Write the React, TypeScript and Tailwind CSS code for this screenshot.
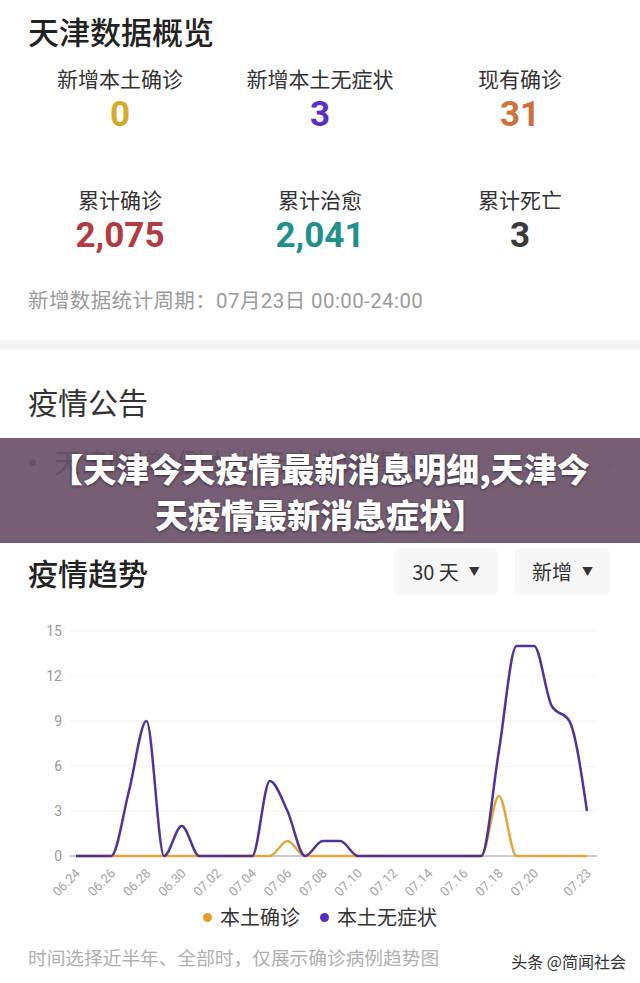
import React from "react";

const stats = [
  { label: "新增本土确诊", value: "0", color: "text-[#d6ab2c]" },
  { label: "新增本土无症状", value: "3", color: "text-[#5b2fbf]" },
  { label: "现有确诊", value: "31", color: "text-[#d0703a]" },
  { label: "累计确诊", value: "2,075", color: "text-[#b33a40]" },
  { label: "累计治愈", value: "2,041", color: "text-[#21908d]" },
  { label: "累计死亡", value: "3", color: "text-[#3a3a3a]" },
];

// 06.24 -> 07.23, one value per day
const asymptomatic = [0, 0, 0, 4.3, 9, 0, 2, 0, 0, 0, 0, 5, 3, 0, 1, 1, 0, 0, 0, 0, 0, 0, 0, 0, 7, 14, 14, 10, 9, 3];
const confirmed = [0, 0, 0, 0, 0, 0, 0, 0, 0, 0, 0, 0, 1, 0, 0, 0, 0, 0, 0, 0, 0, 0, 0, 0, 4, 0, 0, 0, 0, 0];

const xLabels: [number, string][] = [
  [0, "06.24"], [2, "06.26"], [4, "06.28"], [6, "06.30"], [8, "07.02"], [10, "07.04"], [12, "07.06"],
  [14, "07.08"], [16, "07.10"], [18, "07.12"], [20, "07.14"], [22, "07.16"], [24, "07.18"], [26, "07.20"], [29, "07.23"],
];

const STEP = 17.62;
const xOf = (i: number) => 76 + i * STEP;
const yOf = (v: number) => 256 - v * 15;

// monotone cubic, same idea as d3 curveMonotoneX
function monotonePath(vals: number[]) {
  const n = vals.length;
  const ys = vals.map(yOf);
  const h = STEP;
  const m: number[] = new Array(n).fill(0);
  for (let i = 1; i < n - 1; i++) {
    const s0 = (ys[i] - ys[i - 1]) / h;
    const s1 = (ys[i + 1] - ys[i]) / h;
    const p = (s0 + s1) / 2;
    m[i] = (Math.sign(s0) + Math.sign(s1)) * Math.min(Math.abs(s0), Math.abs(s1), 0.5 * Math.abs(p)) || 0;
  }
  m[0] = (3 * (ys[1] - ys[0]) / h - m[1]) / 2;
  m[n - 1] = (3 * (ys[n - 1] - ys[n - 2]) / h - m[n - 2]) / 2;
  let d = `M${xOf(0)},${ys[0]}`;
  for (let i = 0; i < n - 1; i++) {
    const x0 = xOf(i);
    const x1 = xOf(i + 1);
    d += ` C${x0 + h / 3},${ys[i] + (m[i] * h) / 3} ${x1 - h / 3},${ys[i + 1] - (m[i + 1] * h) / 3} ${x1},${ys[i + 1]}`;
  }
  return d;
}

const TrendChart = () => (
  <svg width="640" height="300" viewBox="0 0 640 300" className="block">
    {[15, 12, 9, 6, 3].map((v) => (
      <line key={v} x1="70" x2="597" y1={yOf(v)} y2={yOf(v)} stroke="#efefef" strokeWidth="1" />
    ))}
    <line x1="70" x2="597" y1={yOf(0)} y2={yOf(0)} stroke="#9a9a9a" strokeWidth="1" />
    {[15, 12, 9, 6, 3, 0].map((v) => (
      <text key={v} x="62" y={yOf(v) + 5} textAnchor="end" fontSize="14" fill="#9a9a9a" fontFamily="Roboto, sans-serif">
        {v}
      </text>
    ))}
    {xLabels.map(([i, t]) => (
      <text
        key={t}
        x={xOf(i) + 5}
        y={274}
        textAnchor="end"
        fontSize="13"
        fill="#a5a5a5"
        fontFamily="Roboto, sans-serif"
        transform={`rotate(-45 ${xOf(i) + 5} 274)`}
      >
        {t}
      </text>
    ))}
    <path d={monotonePath(confirmed)} fill="none" stroke="#e2a83c" strokeWidth="2.5" strokeLinejoin="round" />
    <path d={monotonePath(asymptomatic)} fill="none" stroke="#533399" strokeWidth="2.5" strokeLinejoin="round" />
  </svg>
);

const Dropdown = ({ text, w }: { text: string; w: string }) => (
  <div className={`flex h-[47px] ${w} items-center justify-center gap-[10px] rounded-md bg-[#f7f7f7] text-[20px] text-[#333]`}>
    <span>{text}</span>
    <span className="text-[11px] text-[#333]">▼</span>
  </div>
);

export default function App() {
  return (
    <div className="relative w-[640px] overflow-hidden bg-white font-['Noto_Sans_CJK_SC',sans-serif]">
      {/* overview */}
      <div className="px-7 pt-[11px]">
        <h1 className="text-[31px] leading-[40px] font-medium text-[#222]">天津数据概览</h1>
        <div className="mx-[-8px] mt-[13px] grid grid-cols-3 gap-y-[50px]">
          {stats.map((s) => (
            <div key={s.label} className="flex flex-col items-center">
              <div className="text-[21px] leading-[28px] text-[#333]">{s.label}</div>
              <div className={`mt-[3px] font-['Roboto',sans-serif] text-[35px] leading-[40px] font-bold ${s.color}`}>
                {s.value}
              </div>
            </div>
          ))}
        </div>
        <p className="mt-[31px] font-['Roboto','Noto_Sans_CJK_SC',sans-serif] text-[20.5px] leading-[28px] tracking-[0.4px] text-[#9b9b9b]">
          新增数据统计周期：07月23日 00:00-24:00
        </p>
      </div>
      <div className="mt-[25px] h-[10px] bg-[#f4f4f4]" />

      {/* notices */}
      <div className="px-7 pt-[31px]">
        <h2 className="text-[30px] leading-[40px] text-[#333]">疫情公告</h2>
        <div className="mt-[26px] flex h-[30px] items-center">
          <span className="ml-[1px] h-[7px] w-[7px] rounded-full bg-[#a03040]" />
          <span className="ml-[18px] flex-1 text-[27px] leading-[30px] text-[#333]">天津昨增8例本土无症状详情公布</span>
          <span className="text-[24px] text-[#bbb]">›</span>
        </div>
      </div>

      {/* trend */}
      <div className="mt-[71px] flex items-center justify-between pl-7 pr-[30px]">
        <h2 className="text-[30px] leading-[40px] font-medium text-[#222]">疫情趋势</h2>
        <div className="flex gap-[17px]">
          <Dropdown text="30 天" w="w-[104px]" />
          <Dropdown text="新增" w="w-[95px]" />
        </div>
      </div>
      <div className="mt-[5px]">
        <TrendChart />
      </div>
      <div className="mt-[4px] flex items-center justify-center text-[20px] leading-[26px] text-[#333]">
        <span className="h-[9px] w-[9px] rounded-full bg-[#e2a02c]" />
        <span className="ml-[8px]">本土确诊</span>
        <span className="ml-[20px] h-[9px] w-[9px] rounded-full bg-[#5a2fc4]" />
        <span className="ml-[8px]">本土无症状</span>
      </div>
      <div className="mt-[11px] flex items-center justify-between pb-[28px] pl-7 pr-[14px]">
        <span className="text-[18.7px] leading-[28px] text-[#b0b0b0]">时间选择近半年、全部时，仅展示确诊病例趋势图</span>
        <span className="mt-[8px] text-[16px] text-[#333] [text-shadow:0_0_2px_#fff]">头条 @简闻社会</span>
      </div>

      {/* headline banner over the page */}
      <div className="absolute top-[438px] right-0 left-0 flex h-[105px] flex-col items-center justify-center bg-[rgba(108,82,107,0.93)] px-2 text-center text-[33px] leading-[46px] font-black text-white [text-shadow:0_1px_3px_rgba(0,0,0,0.55)]">
        <div>【天津今天疫情最新消息明细,天津今</div>
        <div>天疫情最新消息症状】</div>
      </div>
    </div>
  );
}
